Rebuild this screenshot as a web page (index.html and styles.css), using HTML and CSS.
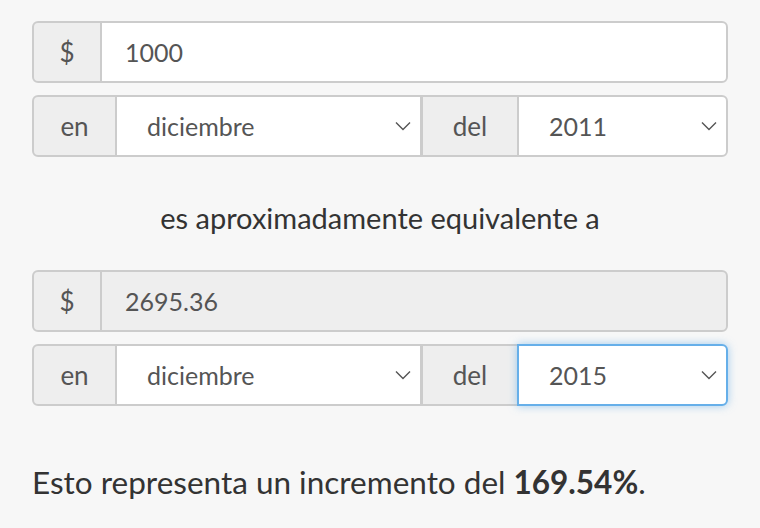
FILE: index.html
```html
<!DOCTYPE html>
<html lang="es">
<head>
    <meta charset="UTF-8">
    <meta name="viewport" content="width=device-width, initial-scale=1.0">
    <title>Calculadora de inflación</title>
    <link rel="stylesheet" href="styles.css">
</head>
<body>
    <div class="converter">
        <div class="input-group">
            <span class="addon addon-dollar">$</span>
            <input class="field amount" type="text" value="1000">
        </div>
        <div class="input-group">
            <span class="addon addon-en">en</span>
            <select class="field month">
                <option>diciembre</option>
            </select>
            <span class="addon addon-del">del</span>
            <select class="field year">
                <option>2011</option>
            </select>
        </div>

        <p class="equiv">es aproximadamente equivalente a</p>

        <div class="input-group">
            <span class="addon addon-dollar">$</span>
            <input class="field amount" type="text" value="2695.36" readonly>
        </div>
        <div class="input-group">
            <span class="addon addon-en">en</span>
            <select class="field month">
                <option>diciembre</option>
            </select>
            <span class="addon addon-del">del</span>
            <select class="field year focused">
                <option>2015</option>
            </select>
        </div>

        <p class="result">Esto representa un incremento del <strong>169.54%</strong>.</p>
    </div>
</body>
</html>
```

FILE: styles.css
```css
body {
    margin: 0;
    background-color: #f7f7f7;
    font-family: Lato, "Liberation Sans", sans-serif;
    color: #333;
}

.converter {
    padding: 21px 32px 0;
}

.input-group {
    display: flex;
    height: 62px;
    margin-bottom: 12px;
}

.addon,
.field {
    box-sizing: border-box;
    height: 62px;
    border: 2px solid #ccc;
    font-family: inherit;
    font-size: 25px;
    color: #555;
}

.addon {
    display: flex;
    align-items: center;
    justify-content: center;
    background-color: #eee;
    font-size: 26px;
}

.addon-dollar {
    width: 70px;
    border-radius: 6px 0 0 6px;
}

.addon-en {
    width: 85px;
    border-radius: 6px 0 0 6px;
}

.addon-del {
    width: 98px;
    margin-left: -1px;
}

.field {
    background-color: #fff;
    margin-left: -2px;
    outline: none;
}

.amount {
    flex: 1;
    padding: 0 23px;
    border-radius: 0 6px 6px 0;
}

.amount[readonly] {
    background-color: #eee;
}

select.field {
    appearance: none;
    -webkit-appearance: none;
    padding: 0 30px;
    background-image: url("data:image/svg+xml,%3Csvg xmlns='http://www.w3.org/2000/svg' width='16' height='10' viewBox='0 0 16 10'%3E%3Cpath d='M1 1.5l7 7 7-7' fill='none' stroke='%23555' stroke-width='1.4'/%3E%3C/svg%3E");
    background-repeat: no-repeat;
    background-position: right 9px center;
}

.month {
    flex: 1;
}

.year {
    width: 211px;
    margin-left: -2px;
    border-radius: 0 6px 6px 0;
}

.year.focused {
    position: relative;
    border-color: #66afe9;
    box-shadow: 0 0 8px rgba(102, 175, 233, 0.6);
}

.equiv {
    margin: 41px 0 32px;
    line-height: 40px;
    text-align: center;
    font-size: 29px;
    color: #333;
}

.result {
    margin: 56px 0 0;
    line-height: 40px;
    font-size: 31.5px;
    color: #333;
}

.result strong {
    font-weight: 700;
}
```
